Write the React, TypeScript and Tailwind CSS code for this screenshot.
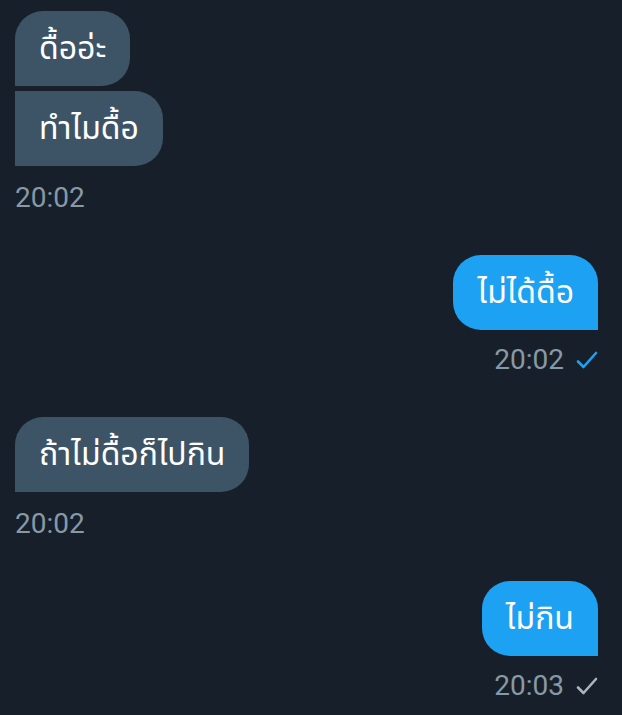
type Msg = {
  texts: string[];
  time: string;
  mine: boolean;
  read?: boolean;
};

const messages: Msg[] = [
  { texts: ["ดื้ออ่ะ", "ทำไมดื้อ"], time: "20:02", mine: false },
  { texts: ["ไม่ได้ดื้อ"], time: "20:02", mine: true, read: true },
  { texts: ["ถ้าไม่ดื้อก็ไปกิน"], time: "20:02", mine: false },
  { texts: ["ไม่กิน"], time: "20:03", mine: true, read: false },
];

const font = "font-['Roboto','Noto_Sans_Thai','Noto_Sans',sans-serif]";

function Bubble({ text, mine, first }: { text: string; mine: boolean; first: boolean }) {
  let corners = "";
  if (mine) {
    corners = `rounded-l-[28px] ${first ? "rounded-tr-[28px]" : ""}`;
  } else {
    corners = `rounded-r-[28px] ${first ? "rounded-tl-[28px]" : ""}`;
  }
  return (
    <div
      className={`${corners} ${
        mine ? "bg-[#1da1f2]" : "bg-[#3d5466]"
      } px-6 py-[18px] text-[32px] leading-[39px] text-white whitespace-nowrap`}
    >
      {text}
    </div>
  );
}

function Tick({ read }: { read?: boolean }) {
  return (
    <svg
      width="22"
      height="19"
      viewBox="0 0 22 19"
      fill="none"
      stroke={read ? "#1da1f2" : "#a9b4bd"}
      strokeWidth="2.6"
      strokeLinecap="round"
      strokeLinejoin="round"
      className="ml-[12px]"
    >
      <path d="M2 10.5 7.5 16 20 2" />
    </svg>
  );
}

export default function App() {
  return (
    <div className={`min-h-screen bg-[#17202a] pl-[15px] pr-[24px] pt-[11px] ${font}`}>
      {messages.map((m, i) => (
        <div
          key={i}
          className={`flex flex-col ${m.mine ? "items-end" : "items-start"} ${i > 0 ? "mt-[41px]" : ""}`}
        >
          <div className={`flex flex-col gap-[5px] ${m.mine ? "items-end" : "items-start"}`}>
            {m.texts.map((t, j) => (
              <Bubble key={j} text={t} mine={m.mine} first={j === 0} />
            ))}
          </div>
          <div className={`flex items-center ${m.mine ? "mt-[14px]" : "mt-[16px]"} h-[32px]`}>
            <span className="text-[28px] leading-[32px] text-[#8899a6] font-['Roboto',sans-serif]">{m.time}</span>
            {m.mine && <Tick read={m.read} />}
          </div>
        </div>
      ))}
    </div>
  );
}
